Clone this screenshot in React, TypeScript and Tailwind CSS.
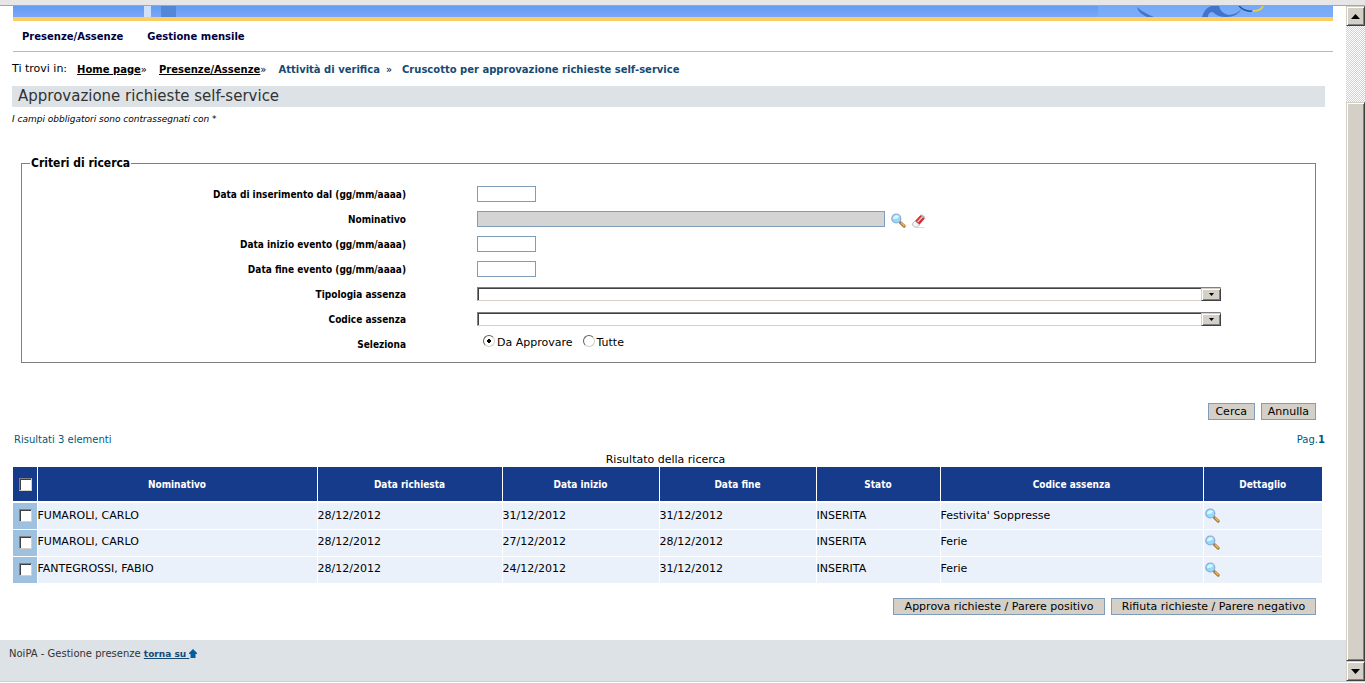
import { clsx } from "clsx"

const results = [
    { id: 1, name: "FUMAROLI, CARLO", requested: "28/12/2012", start: "31/12/2012", end: "31/12/2012", state: "INSERITA", code: "Festivita' Soppresse" },
    { id: 2, name: "FUMAROLI, CARLO", requested: "28/12/2012", start: "27/12/2012", end: "28/12/2012", state: "INSERITA", code: "Ferie" },
    { id: 3, name: "FANTEGROSSI, FABIO", requested: "28/12/2012", start: "24/12/2012", end: "31/12/2012", state: "INSERITA", code: "Ferie" },
]

const headers = ["Nominativo", "Data richiesta", "Data inizio", "Data fine", "Stato", "Codice assenza", "Dettaglio"]

const raised = "border border-t-[#d4d0c8] border-l-[#d4d0c8] border-r-[#404040] border-b-[#404040] bg-[#d4d0c8] shadow-[inset_1px_1px_#fff,inset_-1px_-1px_#808080]"
const sunken = "border border-t-[#808080] border-l-[#808080] border-r-[#d4d0c8] border-b-[#d4d0c8] bg-white shadow-[inset_1px_1px_#404040]"

const MagnifierIcon = () => (
    <svg viewBox="0 0 16 16" className="h-4 w-4">
        <path d="M9.4 9.6 L13.2 13.2" stroke="#9c7445" strokeWidth="3" strokeLinecap="round" />
        <path d="M10.4 10 L13 12.6" stroke="#f5b548" strokeWidth="1.5" strokeLinecap="round" />
        <circle cx="5.3" cy="5.5" r="4.5" fill="#8fdcfb" stroke="#8fa9d4" strokeWidth="1.2" />
        <path d="M2 6 A3.5 3.5 0 0 1 8.2 3.6 Q6.4 6.6 2 6" fill="#dcf6ff" />
    </svg>
)

const EraserIcon = () => (
    <svg viewBox="0 0 16 16" className="h-4 w-4">
        <path d="M6 14.5 L13.5 14.5" stroke="#dedede" strokeWidth="1" />
        <path d="M4 8 L9.6 2 L13.8 5.4 L8.4 11.8 Z" fill="#cf2b2b" />
        <path d="M6.6 9 L11.4 3.8" stroke="#e9b9b9" strokeWidth="1.8" />
        <path d="M4 8 L8.4 11.8 L6.2 14.2 L3.4 14 L1.4 12 L1.6 10.4 Z" fill="#f4f4f4" stroke="#a3a3a3" strokeWidth="0.7" />
        <path d="M9.6 2 L10.8 1.2 L14 3.8 L13.8 5.4 Z" fill="#b5b5b5" />
    </svg>
)

const Banner = () => (
    <div className="mx-[13px] h-[15px] overflow-hidden border-b-4 border-[#fbcd62] bg-linear-to-b from-[#639cf2] to-[#7ba7f8]">
        <div className="flex h-full justify-between">
            <svg viewBox="0 0 60 11" className="ml-[131px] h-[11px] w-[60px]">
                <rect width="7" height="11" fill="#cfe0fd" />
                <rect x="17" width="15" height="11" fill="#5487d8" />
            </svg>
            <svg viewBox="0 0 235 11" className="h-[11px] w-[235px]">
                <rect width="235" height="11" fill="#80b2f9" opacity="0.6" />
                <path d="M39 1 Q44 6 56 11 L49 11 Q40 7 39 1 Z" fill="#4576cc" />
                <path d="M104 11 Q106 3 113 0 L121 0 Q123 8 131 9 Q140 8 144 2 Q140 11 128 11 Q119 11 115 6 Q110 6 110 11 Z" fill="#4274cb" />
                <path d="M141 0 Q147 6 154 5" stroke="#28509a" strokeWidth="1.5" fill="none" />
                <path d="M155 5 Q163 5 165 0" stroke="#e3cf4a" strokeWidth="1.8" fill="none" />
            </svg>
        </div>
    </div>
)

const Breadcrumb = () => (
    <nav className="ml-3 flex h-4 items-center text-[10px] whitespace-pre">
        <span className="mr-2.5 text-[11px]">Ti trovi in:</span>
        <a href="#" className="font-bold underline">Home page</a>
        <span className="mr-3">»</span>
        <a href="#" className="font-bold underline">Presenze/Assenze</a>
        <span className="mr-3">»</span>
        <span className="font-bold text-[#164a73]">Attività di verifica</span>
        <span className="mr-2.5 ml-1.5">»</span>
        <span className="font-bold text-[#164a73]">Cruscotto per approvazione richieste self-service</span>
    </nav>
)

const Field = ({ id, label, children }: { id: string; label: string; children: React.ReactNode }) => (
    <div className="flex h-[25px] items-center gap-[71px]">
        <label htmlFor={id} className="w-96 shrink-0 pt-0.5 text-right font-['DejaVu_Sans_Condensed','DejaVu_Sans',sans-serif] text-[10px] font-bold">{label}</label>
        {children}
    </div>
)

const DateInput = ({ id }: { id: string }) => (
    <input id={id} type="text" className="h-4 w-[59px] border border-[#7f9db9] px-1 text-[10px]" />
)

const Dropdown = ({ id }: { id: string }) => (
    <div className="relative h-[14px] w-[744px]">
        <select id={id} className={clsx("block h-full w-full appearance-none text-[10px]", sunken)}>
            <option></option>
        </select>
        <span className={clsx("pointer-events-none absolute top-px right-0 flex h-[13px] w-5 items-center justify-center", raised)}>
            <svg viewBox="0 0 5 3" className="h-[3px] w-[5px]"><path d="M0 0 H5 L2.5 3 Z" /></svg>
        </span>
    </div>
)

const Radio = ({ label, checked }: { label: string; checked?: boolean }) => (
    <label className="flex items-center gap-0.5 text-[11px]">
        <input
            type="radio"
            name="seleziona"
            defaultChecked={checked}
            className="mb-1.5 h-3 w-3 appearance-none rounded-full border border-t-[#606060] border-r-[#d4d0c8] border-b-[#d4d0c8] border-l-[#606060] bg-white checked:bg-[radial-gradient(circle,#000_2px,#fff_2px)]"
        />
        {label}
    </label>
)

const Checkbox = ({ label }: { label: string }) => (
    <input type="checkbox" aria-label={label} className={clsx("block h-[13px] w-[13px] appearance-none", sunken)} />
)

const Button = ({ className, children }: { className?: string; children: React.ReactNode }) => (
    <button type="button" className={clsx("h-[17px] border border-[#7f9db9] bg-[#d4d0c8] px-1.5 text-[11px] leading-[15px]", className)}>{children}</button>
)

const SearchForm = () => (
    <fieldset className="mr-[30px] ml-[21px] border border-[#808080] pb-1.5">
        <legend className="ml-2 px-px font-['DejaVu_Sans_Condensed','DejaVu_Sans',sans-serif] text-[12px] leading-4 font-bold">Criteri di ricerca</legend>
        <div className="pt-2.5">
            <Field id="inserimento" label="Data di inserimento dal (gg/mm/aaaa)"><DateInput id="inserimento" /></Field>
            <Field id="nominativo" label="Nominativo">
                <div className="flex items-center">
                    <input id="nominativo" type="text" readOnly className="h-4 w-[408px] border border-[#7f9db9] bg-[#d4d4d4]" />
                    <button type="button" aria-label="Cerca nominativo" className="mt-1 ml-1.5"><MagnifierIcon /></button>
                    <button type="button" aria-label="Cancella nominativo" className="mt-1 ml-1"><EraserIcon /></button>
                </div>
            </Field>
            <Field id="inizio" label="Data inizio evento (gg/mm/aaaa)"><DateInput id="inizio" /></Field>
            <Field id="fine" label="Data fine evento (gg/mm/aaaa)"><DateInput id="fine" /></Field>
            <Field id="tipologia" label="Tipologia assenza"><Dropdown id="tipologia" /></Field>
            <Field id="codice" label="Codice assenza"><Dropdown id="codice" /></Field>
            <div role="radiogroup" aria-labelledby="seleziona" className="flex h-[25px] items-center gap-[71px]">
                <span id="seleziona" className="w-96 shrink-0 pt-0.5 text-right font-['DejaVu_Sans_Condensed','DejaVu_Sans',sans-serif] text-[10px] font-bold">Seleziona</span>
                <div className="ml-1.5 flex gap-2.5">
                    <Radio label="Da Approvare" checked />
                    <Radio label="Tutte" />
                </div>
            </div>
        </div>
    </fieldset>
)

const ResultsTable = () => (
    <table className="w-full table-fixed border-collapse text-[11px]">
        <caption className="h-[14px] pr-1 text-center leading-[14px]">Risultato della ricerca</caption>
        <colgroup>
            <col className="w-6" />
            <col className="w-[280px]" />
            <col className="w-[185px]" />
            <col className="w-[157px]" />
            <col className="w-[157px]" />
            <col className="w-[124px]" />
            <col className="w-[263px]" />
            <col className="w-[119px]" />
        </colgroup>
        <thead>
            <tr className="h-[35px] border-b-2 border-white bg-[#173b8b] text-[10px] text-white">
                <th className="border-r border-white pl-1.5"><Checkbox label="Seleziona tutti" /></th>
                {headers.map((header) => (
                    <th key={header} className="border-r border-white font-['DejaVu_Sans_Condensed','DejaVu_Sans',sans-serif] font-bold last:border-r-0">{header}</th>
                ))}
            </tr>
        </thead>
        <tbody>
            {results.map((row) => (
                <tr key={row.id} className="h-[27px] border-b border-white bg-[#eaf1fa]">
                    <td className="border-r border-white bg-[#9fc1e0] pl-1.5"><Checkbox label={`Seleziona ${row.name}`} /></td>
                    <td className="border-r border-white">{row.name}</td>
                    <td className="border-r border-white">{row.requested}</td>
                    <td className="border-r border-white">{row.start}</td>
                    <td className="border-r border-white">{row.end}</td>
                    <td className="border-r border-white">{row.state}</td>
                    <td className="border-r border-white">{row.code}</td>
                    <td className="pl-px"><button type="button" aria-label="Dettaglio" className="block"><MagnifierIcon /></button></td>
                </tr>
            ))}
        </tbody>
    </table>
)

const Scrollbar = () => (
    <div aria-hidden="true" className="flex w-[19px] shrink-0 flex-col bg-[repeating-conic-gradient(#d4d0c8_0_25%,#fff_0_50%)] bg-size-[2px_2px]">
        <div className={clsx("flex h-5 items-center justify-center", raised)}>
            <svg viewBox="0 0 9 5" className="h-[5px] w-[9px]"><path d="M4.5 0 L9 5 H0 Z" /></svg>
        </div>
        <div className="h-[76px]" />
        <div className={clsx("flex-1", raised)} />
        <div className={clsx("flex h-5 items-center justify-center", raised)}>
            <svg viewBox="0 0 9 5" className="h-[5px] w-[9px]"><path d="M0 0 H9 L4.5 5 Z" /></svg>
        </div>
    </div>
)

export default function App() {
    return (
        <div className="flex min-h-screen flex-col bg-white font-['DejaVu_Sans',Verdana,sans-serif] text-black">
            <div className="h-1.5 border-b border-[#a5a5a5] bg-[#e6e6e6]" />
            <div className="flex flex-1">
                <div className="flex min-w-0 flex-1 flex-col">
                    <Banner />
                    <nav className="mx-[13px] flex h-[31px] items-center gap-6 border-b border-[#a9b8e8] pl-[9px] text-[10px] font-bold text-[#000040]">
                        <a href="#">Presenze/Assenze</a>
                        <a href="#">Gestione mensile</a>
                    </nav>
                    <div className="h-[9px]" />
                    <Breadcrumb />
                    <h1 className="mt-[9px] mr-[21px] ml-3 h-[21px] bg-[#dde2e6] pl-1.5 text-[15px] leading-[21px] text-[#333]">Approvazione richieste self-service</h1>
                    <p className="mt-1 ml-3 text-[9px] leading-4 italic">I campi obbligatori sono contrassegnati con *</p>
                    <div className="h-7" />
                    <SearchForm />
                    <div className="mt-10 mr-[30px] flex justify-end gap-1.5">
                        <Button className="w-[47px]">Cerca</Button>
                        <Button>Annulla</Button>
                    </div>
                    <div className="mt-3 mr-[21px] ml-[14px] flex justify-between text-[10px] leading-4 text-[#005a7d]">
                        <span>Risultati 3 elementi</span>
                        <span>Pag.<b>1</b></span>
                    </div>
                    <div className="mt-[5px] mr-6 ml-[13px]">
                        <ResultsTable />
                    </div>
                    <div className="mt-[14px] mr-[30px] mb-[25px] flex justify-end gap-1.5">
                        <Button className="w-[212px]">Approva richieste / Parere positivo</Button>
                        <Button className="w-[205px]">Rifiuta richieste / Parere negativo</Button>
                    </div>
                    <footer className="flex flex-1 items-start bg-[#dde2e6] pt-1.5 pl-[9px] text-[10px] leading-4 whitespace-pre text-[#333]">
                        NoiPA - Gestione presenze{" "}
                        <a href="#" className="flex items-center text-[9px] font-bold text-[#164a73]">
                            <span className="underline">torna su </span>
                            <svg viewBox="0 0 8 9" className="h-[9px] w-2"><path d="M4 0 L8 4 V5 H6.5 V9 H1.5 V5 H0 V4 Z" fill="#005f9e" /></svg>
                        </a>
                    </footer>
                </div>
                <Scrollbar />
            </div>
            <div className="h-[3px] border-y border-[#d4d0c8] bg-white" />
        </div>
    )
}
